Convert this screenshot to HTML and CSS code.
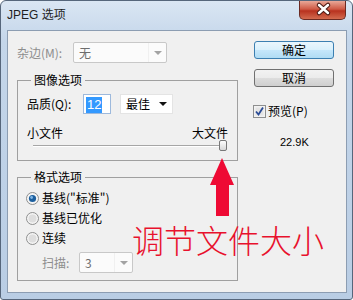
FILE: index.html
```html
<!DOCTYPE html>
<html lang="zh-CN">
<head>
    <meta charset="UTF-8">
    <title>JPEG 选项</title>
    <link rel="stylesheet" href="styles.css">
</head>
<body>
    <div class="window">
        <div class="titlebar">
            <span class="title">JPEG 选项</span>
            <div class="close">
                <svg width="47" height="19" viewBox="0 0 47 19">
                    <path d="M19 5 L28 13 M28 5 L19 13" stroke="#4a1a14" stroke-width="4.5" stroke-linecap="round"/>
                    <path d="M19 5 L28 13 M28 5 L19 13" stroke="#ffffff" stroke-width="2.5" stroke-linecap="round"/>
                </svg>
            </div>
        </div>
        <div class="client">
            <div class="left">
                <div class="matte-row">
                    <span class="label disabled">杂边(M):</span>
                    <div class="combo combo-disabled matte">
                        <span>无</span>
                        <span class="drop"><span class="arrow"></span></span>
                    </div>
                </div>

                <fieldset class="group image-group">
                    <legend>图像选项</legend>
                    <div class="quality-row">
                        <span class="label">品质(Q):</span>
                        <div class="num"><span class="sel">12</span></div>
                        <div class="combo quality">
                            <span>最佳</span>
                            <span class="arrow dark"></span>
                        </div>
                    </div>
                    <div class="size-labels">
                        <span>小文件</span>
                        <span>大文件</span>
                    </div>
                    <div class="slider"><div class="thumb"></div></div>
                </fieldset>

                <fieldset class="group format-group">
                    <legend>格式选项</legend>
                    <div class="radio">
                        <svg width="13" height="13" viewBox="0 0 13 13">
                            <circle cx="6.5" cy="6.5" r="6" fill="#f4f4f4" stroke="#8e8f8f"/>
                            <circle cx="6.5" cy="6.5" r="3.6" fill="#1c5f9e"/>
                            <circle cx="5.6" cy="5.5" r="1.4" fill="#7fb6e6"/>
                        </svg>
                        <span>基线("标准")</span>
                    </div>
                    <div class="radio">
                        <svg width="13" height="13" viewBox="0 0 13 13">
                            <circle cx="6.5" cy="6.5" r="6" fill="#f4f4f4" stroke="#8e8f8f"/>
                            <circle cx="6.5" cy="6.5" r="4" fill="#dedede"/>
                        </svg>
                        <span>基线已优化</span>
                    </div>
                    <div class="radio">
                        <svg width="13" height="13" viewBox="0 0 13 13">
                            <circle cx="6.5" cy="6.5" r="6" fill="#f4f4f4" stroke="#8e8f8f"/>
                            <circle cx="6.5" cy="6.5" r="4" fill="#dedede"/>
                        </svg>
                        <span>连续</span>
                    </div>
                    <div class="scan-row">
                        <span class="label disabled">扫描:</span>
                        <div class="combo combo-disabled scan">
                            <span>3</span>
                            <span class="drop"><span class="arrow"></span></span>
                        </div>
                    </div>
                </fieldset>
            </div>

            <div class="right">
                <button class="btn default">确定</button>
                <button class="btn">取消</button>
                <div class="check">
                    <svg width="13" height="13" viewBox="0 0 13 13">
                        <rect x="0.5" y="0.5" width="12" height="12" fill="#f2f2f2" stroke="#8e8f8f"/>
                        <rect x="2.5" y="2.5" width="8" height="8" fill="#e4e4e4"/>
                        <path d="M3 6.5 L5.5 9.5 L10 2.5" fill="none" stroke="#2a4b96" stroke-width="1.8"/>
                    </svg>
                    <span>预览(P)</span>
                </div>
                <div class="filesize">22.9K</div>
            </div>

            <!-- 标注 -->
            <svg class="note-arrow" width="24" height="58" viewBox="0 0 24 58">
                <polygon points="12,0 24,27 19,27 19,58 6,58 6,27 0,27" fill="#ee0a34"/>
            </svg>
            <div class="note-text">调节文件大小</div>
        </div>
    </div>
</body>
</html>
```

FILE: styles.css
```css
/* Estilos generales */
* {
    box-sizing: border-box;
}

body {
    margin: 0;
    background-color: #ffffff;
    font-family: "Noto Sans CJK SC", sans-serif;
    font-size: 12px;
    color: #000000;
}

/* Ventana */
.window {
    width: 353px;
    height: 300px;
    border: 1px solid #56667b;
    border-radius: 6px 6px 3px 3px;
    background: linear-gradient(#dae6f3, #c4d6ea 40px, #b9cde4);
    padding: 0 5px 6px 6px;
    display: flex;
    flex-direction: column;
}

.titlebar {
    height: 29px;
    display: flex;
    align-items: flex-start;
}

.title {
    font-family: "Liberation Sans", "Noto Sans CJK SC", sans-serif;
    font-size: 12px;
    line-height: 16px;
    margin-top: 6px;
    color: #1e1e1e;
}

.close {
    margin-left: auto;
    margin-right: 1px;
    width: 47px;
    height: 19px;
    border: 1px solid #6b2a22;
    border-top: none;
    border-radius: 0 0 5px 5px;
    background: linear-gradient(#e9a898, #cf5a45 45%, #b8321f 55%, #d36b4f);
}

.close svg {
    display: block;
    margin-top: -1px;
}

.client {
    position: relative;
    height: 263px;
    border: 1px solid #8c9db2;
    background-color: #f0f0f0;
    display: flex;
    padding: 0 12px 0 9px;
}

.left {
    width: 221px;
    padding-top: 11px;
}

.right {
    width: 80px;
    margin-left: 16px;
    padding-top: 10px;
    display: flex;
    flex-direction: column;
}

.label {
    line-height: 16px;
}

.disabled {
    color: #8d8d8d;
}

/* Combos */
.matte-row {
    height: 21px;
    display: flex;
    align-items: center;
}

.matte-row .label {
    width: 56px;
}

.combo {
    display: flex;
    align-items: center;
    height: 100%;
    padding-left: 5px;
    line-height: 16px;
}

.combo-disabled {
    background-color: #fbfbfb;
    border: 1px solid #c8c8c8;
    border-radius: 2px;
    color: #6d6d6d;
}

.matte {
    width: 94px;
}

.drop {
    margin-left: auto;
    width: 18px;
    height: 100%;
    display: flex;
    align-items: center;
    justify-content: center;
    border-left: 1px solid #f0f0f0;
}

.arrow {
    width: 0;
    height: 0;
    border-left: 4px solid transparent;
    border-right: 4px solid transparent;
    border-top: 4px solid #a3a3a3;
}

.arrow.dark {
    margin-left: auto;
    margin-right: 5px;
    border-top-color: #111111;
}

/* Grupos */
.group {
    margin: 0;
    width: 221px;
    border: 1px solid #a0a0a0;
    padding: 6px 9px 9px 9px;
}

.group legend {
    padding: 0 3px;
    margin-left: 4px;
    line-height: 16px;
}

.image-group {
    margin-top: 9px;
}

.quality-row {
    height: 20px;
    display: flex;
    align-items: center;
}

.quality-row .label {
    width: 56px;
}

.num {
    width: 28px;
    height: 20px;
    border: 1px solid #9db9dc;
    background-color: #ffffff;
    padding: 1px 0 0 2px;
    line-height: 16px;
}

.sel {
    display: inline-block;
    background-color: #3399ff;
    color: #ffffff;
    padding: 0 1px;
    font-family: "Liberation Sans", sans-serif;
    font-size: 13px;
}

.quality {
    width: 53px;
    margin-left: 9px;
    background-color: #ffffff;
    border: 1px solid #e4e4e4;
}

.size-labels {
    margin-top: 11px;
    display: flex;
    justify-content: space-between;
    line-height: 16px;
}

.slider {
    margin: -1px 1px 0 6px;
    height: 11px;
    display: flex;
    justify-content: flex-end;
    background: linear-gradient(transparent 5px, #a6a6a6 5px, #a6a6a6 6px, #ffffff 6px, #ffffff 7px, transparent 7px);
}

.thumb {
    width: 8px;
    height: 11px;
    border: 1px solid #787878;
    border-radius: 2px;
    background: linear-gradient(#fdfdfd, #d8d8d8);
}

.format-group {
    margin-top: 8px;
    padding: 3px 9px 7px 9px;
}

.radio {
    height: 20px;
    display: flex;
    align-items: center;
    gap: 3px;
    margin-left: -1px;
    line-height: 16px;
}

.radio svg {
    display: block;
}

.scan-row {
    margin-top: 4px;
    height: 21px;
    display: flex;
    align-items: center;
}

.scan-row .label {
    margin-left: 15px;
    width: 37px;
}

.scan {
    width: 54px;
}

/* Botones */
.btn {
    height: 18px;
    padding: 0;
    font-family: inherit;
    font-size: 12px;
    line-height: 14px;
    color: #000000;
    border: 1px solid #707070;
    border-radius: 3px;
    background: linear-gradient(#f2f2f2, #ebebeb 50%, #dddddd 50%, #cfcfcf);
}

.btn + .btn {
    margin-top: 10px;
}

.btn.default {
    border-color: #3c7fb1;
    background: linear-gradient(#eaf6fd, #d9f0fc 50%, #c6e7fb 50%, #b0dcf4);
}

.check {
    margin-top: 16px;
    margin-left: -1px;
    display: flex;
    align-items: center;
    gap: 2px;
    line-height: 16px;
}

.check svg {
    display: block;
}

.filesize {
    margin-top: 15px;
    margin-left: 26px;
    font-family: "Liberation Sans", sans-serif;
    font-size: 11px;
    line-height: 16px;
}

/* Anotación */
.note-arrow {
    position: absolute;
    left: 202px;
    top: 127px;
}

.note-text {
    position: absolute;
    left: 124px;
    top: 192px;
    font-size: 32px;
    font-weight: 300;
    line-height: 32px;
    color: #e8112d;
    white-space: nowrap;
}
```
